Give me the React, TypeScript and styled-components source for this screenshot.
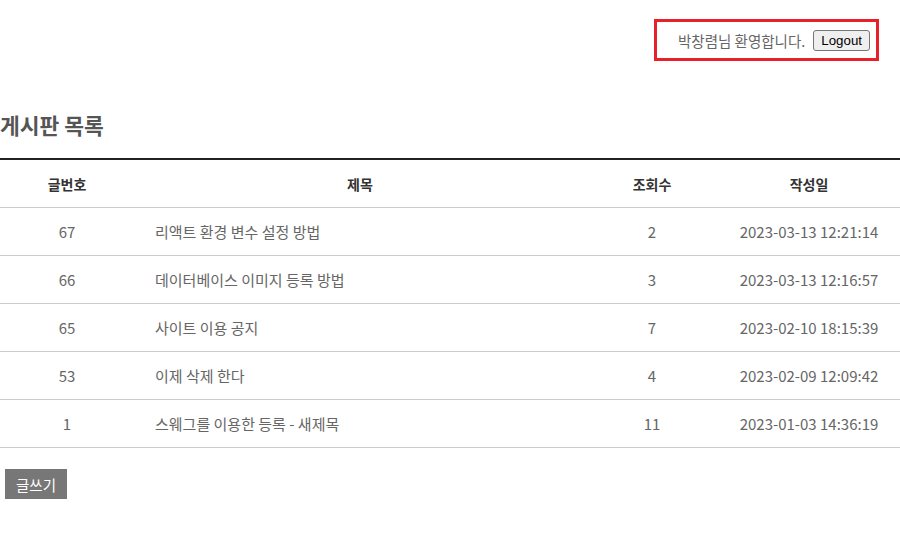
import styled, { createGlobalStyle } from "styled-components";

type Post = {
  no: number
  title: string
  views: number
  date: string
}

const posts: Post[] = [
  { no: 67, title: "리액트 환경 변수 설정 방법", views: 2, date: "2023-03-13 12:21:14" },
  { no: 66, title: "데이터베이스 이미지 등록 방법", views: 3, date: "2023-03-13 12:16:57" },
  { no: 65, title: "사이트 이용 공지", views: 7, date: "2023-02-10 18:15:39" },
  { no: 53, title: "이제 삭제 한다", views: 4, date: "2023-02-09 12:09:42" },
  { no: 1, title: "스웨그를 이용한 등록 - 새제목", views: 11, date: "2023-01-03 14:36:19" },
]

export default function App() {
  return (
    <>
      <GlobalStyle />
      <Page>
        <TopBar>
          <UserBox>
            <span>박창렴님 환영합니다.</span>
            <LogoutButton>Logout</LogoutButton>
          </UserBox>
        </TopBar>

        <Title>게시판 목록</Title>

        <Table>
          <colgroup>
            <col style={{ width: 134 }} />
            <col style={{ width: 452 }} />
            <col style={{ width: 132 }} />
            <col />
          </colgroup>
          <thead>
            <tr>
              <Th>글번호</Th>
              <Th>제목</Th>
              <Th>조회수</Th>
              <Th>작성일</Th>
            </tr>
          </thead>
          <tbody>
            {posts.map(p => (
              <tr key={p.no}>
                <Td>{p.no}</Td>
                <Td $left>{p.title}</Td>
                <Td>{p.views}</Td>
                <Td>{p.date}</Td>
              </tr>
            ))}
          </tbody>
        </Table>

        <WriteButton>글쓰기</WriteButton>
      </Page>
    </>
  )
}

const GlobalStyle = createGlobalStyle`
  body {
    margin: 0;
    background: #fff;
    font-family: "Noto Sans CJK KR", "Noto Sans", sans-serif;
  }
`

const Page = styled.div`
  width: 900px;
  color: #666;
`

const TopBar = styled.div`
  display: flex;
  justify-content: flex-end;
  padding: 19px 21px 0 0;
`

const UserBox = styled.div`
  display: flex;
  align-items: center;
  gap: 8px;
  height: 36px;
  padding: 0 6px 0 21px;
  border: 3px solid #e8202a;
  font-size: 14.5px;
  color: #666;
`

const LogoutButton = styled.button`
  font-family: "Liberation Sans", Arial, sans-serif;
  font-size: 13.3px;
  color: #000;
  height: 21px;
  padding: 0 7px;
  background: #efefef;
  border: 1px solid #767676;
  border-radius: 3px;
`

const Title = styled.h2`
  margin: 50px 0 19px;
  font-size: 21.5px;
  font-weight: 700;
  line-height: 28px;
  color: #555;
`

const Table = styled.table`
  width: 100%;
  border-collapse: collapse;
  border-top: 2px solid #222;
  table-layout: fixed;
`

const Th = styled.th`
  height: 47px;
  padding: 0;
  font-size: 14px;
  font-weight: 700;
  color: #333;
  text-align: center;
  border-bottom: 1px solid #ccc;
`

const Td = styled.td<{ $left?: boolean }>`
  height: 47px;
  font-size: 15px;
  color: #666;
  text-align: ${p => p.$left ? "left" : "center"};
  padding: ${p => p.$left ? "0 0 0 21px" : "0"};
  border-bottom: 1px solid #ccc;
`

const WriteButton = styled.button`
  display: block;
  margin: 21px 0 0 5px;
  height: 30px;
  padding: 0 11px;
  border: none;
  background: #777;
  color: #fff;
  font-family: "Noto Sans CJK KR", sans-serif;
  font-size: 14.5px;
`
